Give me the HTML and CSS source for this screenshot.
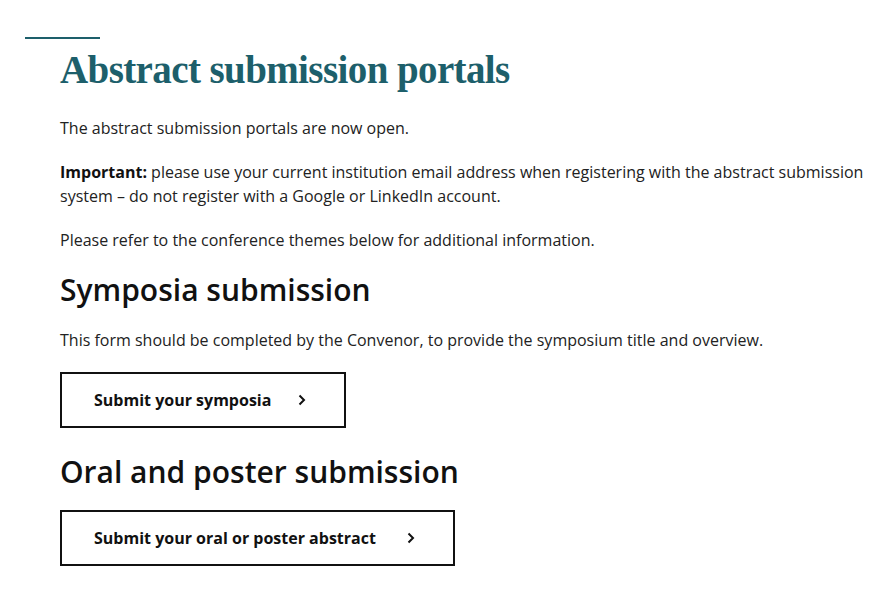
FILE: index.html
```html
<!DOCTYPE html>
<html lang="en">
<head>
<meta charset="utf-8">
<title>Abstract submission portals</title>
<link rel="stylesheet" href="styles.css">
</head>
<body>
<div class="page">
  <div class="rule"></div>
  <main class="content">
    <h1 class="title">Abstract submission portals</h1>
    <p class="text">The abstract submission portals are now open.</p>
    <p class="text"><strong>Important:</strong> please use your current institution email address when registering with the abstract submission system – do not register with a Google or LinkedIn account.</p>
    <p class="text">Please refer to the conference themes below for additional information.</p>
    <h2 class="subtitle">Symposia submission</h2>
    <p class="text">This form should be completed by the Convenor, to provide the symposium title and overview.</p>
    <a class="btn" href="#">Submit your symposia
      <svg class="chev" width="8" height="12" viewBox="0 0 8 12"><path d="M1.5 1.5 L6 6 L1.5 10.5" fill="none" stroke="#111" stroke-width="2"/></svg>
    </a>
    <h2 class="subtitle second">Oral and poster submission</h2>
    <a class="btn wide" href="#">Submit your oral or poster abstract
      <svg class="chev" width="8" height="12" viewBox="0 0 8 12"><path d="M1.5 1.5 L6 6 L1.5 10.5" fill="none" stroke="#111" stroke-width="2"/></svg>
    </a>
  </main>
</div>
</body>
</html>
```
FILE: styles.css
```css
html, body {
  margin: 0;
  padding: 0;
  background: #fff;
}
body {
  font-family: "Open Sans", "Liberation Sans", sans-serif;
  color: #222;
  font-size: 16px;
  line-height: 24px;
}
.page {
  padding: 37px 10px 0 25px;
}
.rule {
  width: 75px;
  height: 2px;
  background: #1d5f6b;
}
.content {
  padding-left: 35px;
}
.title {
  font-family: "Liberation Serif", "Times New Roman", serif;
  font-weight: bold;
  font-size: 39px;
  line-height: 48px;
  color: #1d5f6b;
  margin: 7px 0 0 0;
  letter-spacing: -0.6px;
}
.text {
  margin: 22px 0 0 0;
}
.text + .text {
  margin-top: 20px;
}
.text strong {
  font-weight: 700;
  color: #111;
}
.subtitle {
  font-size: 30px;
  line-height: 36px;
  font-weight: 600;
  color: #111;
  margin: 20px 0 0 0;
}
.subtitle.second {
  margin-top: 26px;
}
.subtitle + .text {
  margin-top: 20px;
}
.btn {
  display: inline-flex;
  align-items: center;
  gap: 27px;
  height: 56px;
  box-sizing: border-box;
  border: 2px solid #111;
  padding: 0 38px 0 32px;
  margin-top: 20px;
  font-weight: 700;
  font-size: 16px;
  color: #111;
  text-decoration: none;
}
.btn.wide {
  gap: 31px;
}
.chev {
  display: block;
}
```
